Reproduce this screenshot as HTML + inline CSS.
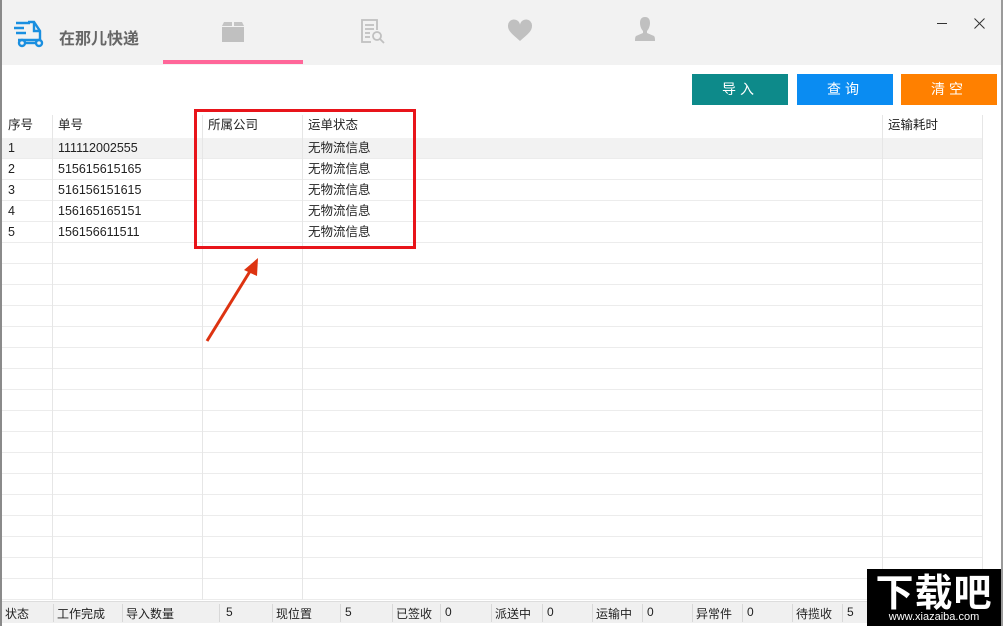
<!DOCTYPE html>
<html><head><meta charset="utf-8"><style>
*{margin:0;padding:0;box-sizing:border-box}
body{width:1003px;height:626px;overflow:hidden;background:#fff;font-family:"Liberation Sans","Noto Sans CJK SC",sans-serif;position:relative;font-size:12px;color:#222}
.top{position:absolute;left:0;top:0;width:1003px;height:65px;background:#f2f2f2}
.abs{position:absolute}
.btn{position:absolute;top:74px;height:31px;color:#fff;font-size:14px;text-align:center;line-height:31px;letter-spacing:4px}
.grid{position:absolute;left:2px;top:138px;width:980px;height:462px;
background-image:linear-gradient(to bottom,transparent 20px,#ececec 20px);background-size:100% 21px}
.vl{position:absolute;top:115px;height:485px;width:1px;background:#e6e6e6}
.cell{position:absolute;font-size:12.5px;line-height:21px}
.sb{position:absolute;left:2px;top:601px;width:865px;height:22px;background:#f0f0f0;border-top:1px solid #ddd}
.sb span{position:absolute;top:3px;font-size:12px}
.sb i{position:absolute;top:2px;width:1px;height:18px;background:#d8d8d8}
</style></head><body>
<div class="top"></div>
<div class="abs" style="left:0;top:0;width:2px;height:626px;background:#8a8a8a"></div>
<div class="abs" style="left:1001px;top:0;width:2px;height:626px;background:#9a9a9a"></div>
<svg class="abs" style="left:14px;top:20px" width="36" height="28" viewBox="0 0 36 28"><g stroke="#1a8fe0" stroke-width="2.4" fill="none"><path d="M2 3h14M0 8h10M2 13h10"/><path d="M14 2h6l6 9v9H4"/><path d="M20 2v9h6"/><circle cx="8" cy="23" r="3"/><circle cx="25" cy="23" r="3"/><path d="M11 23h11"/></g></svg>
<div class="abs" style="left:59px;top:25px;font-size:16px;color:#666;font-weight:bold">在那儿快递</div>
<svg class="abs" style="left:221px;top:22px" width="24" height="20"><path d="M1 5h22v15H1z" fill="#c0c0c0"/><path d="M3 0h8v4H1zM13 0h8l2 4H13z" fill="#c4c4c4"/></svg>
<div class="abs" style="left:163px;top:60px;width:140px;height:4px;background:#ff6699"></div>
<svg class="abs" style="left:361px;top:19px" width="26" height="25"><g fill="none" stroke="#c0c0c0" stroke-width="1.8"><path d="M10 23H1V1h15v10"/><path d="M4 6h9M4 10h9M4 14h5M4 18h5"/><circle cx="16" cy="17" r="4"/><path d="M19 20l4 4"/></g></svg>
<svg class="abs" style="left:507px;top:19px" width="26" height="23"><path d="M13 22C5 15 1 12 1 7a6 6 0 0 1 12-1 6 6 0 0 1 12 1c0 5-4 8-12 15z" fill="#c0c0c0"/></svg>
<svg class="abs" style="left:634px;top:16px" width="22" height="26"><path d="M11 1c4 0 5 3 5 6 0 4-2 7-3 8v2l7 3c1 1 1 3 1 5H1c0-2 0-4 1-5l7-3v-2c-1-1-3-4-3-8 0-3 1-6 5-6z" fill="#c0c0c0"/></svg>
<div class="abs" style="left:937px;top:23px;width:10px;height:1px;background:#333"></div>
<svg class="abs" style="left:974px;top:18px" width="11" height="11"><path d="M0.5 0.5l10 10M10.5 0.5l-10 10" stroke="#333" stroke-width="1"/></svg>
<div class="btn" style="left:692px;width:96px;background:#0d8a8a">导入</div>
<div class="btn" style="left:797px;width:96px;background:#0a8cf2">查询</div>
<div class="btn" style="left:901px;width:96px;background:#ff8000">清空</div>
<div class="grid"></div>
<div class="abs" style="left:2px;top:138px;width:980px;height:20px;background:#f2f2f2"></div>
<div class="vl" style="left:52px"></div>
<div class="vl" style="left:202px"></div>
<div class="vl" style="left:302px"></div>
<div class="vl" style="left:882px"></div>
<div class="vl" style="left:982px"></div>
<div class="cell" style="left:8px;top:115px">序号</div>
<div class="cell" style="left:58px;top:115px">单号</div>
<div class="cell" style="left:208px;top:115px">所属公司</div>
<div class="cell" style="left:308px;top:115px">运单状态</div>
<div class="cell" style="left:888px;top:115px">运输耗时</div>
<div class="cell" style="left:8px;top:138px">1<br>2<br>3<br>4<br>5</div>
<div class="cell" style="left:58px;top:138px">111112002555<br>515615615165<br>516156151615<br>156165165151<br>156156611511</div>
<div class="cell" style="left:308px;top:138px">无物流信息<br>无物流信息<br>无物流信息<br>无物流信息<br>无物流信息</div>
<div class="abs" style="left:194px;top:109px;width:222px;height:140px;border:3px solid #e8141a"></div>
<svg class="abs" style="left:200px;top:250px" width="70" height="95"><path d="M7 91L52 18" stroke="#d31" stroke-width="3"/><path d="M58 8L44 20l13 6z" fill="#d31"/></svg>
<div class="sb">
<span style="left:3px">状态</span><i style="left:51px"></i>
<span style="left:55px">工作完成</span><i style="left:120px"></i>
<span style="left:124px">导入数量</span><i style="left:217px"></i>
<span style="left:224px">5</span><i style="left:270px"></i>
<span style="left:274px">现位置</span><i style="left:338px"></i>
<span style="left:343px">5</span><i style="left:390px"></i>
<span style="left:394px">已签收</span><i style="left:438px"></i>
<span style="left:443px">0</span><i style="left:489px"></i>
<span style="left:493px">派送中</span><i style="left:540px"></i>
<span style="left:545px">0</span><i style="left:590px"></i>
<span style="left:594px">运输中</span><i style="left:640px"></i>
<span style="left:645px">0</span><i style="left:690px"></i>
<span style="left:694px">异常件</span><i style="left:740px"></i>
<span style="left:745px">0</span><i style="left:790px"></i>
<span style="left:794px">待揽收</span><i style="left:840px"></i>
<span style="left:845px">5</span>
</div>
<div class="abs" style="left:867px;top:569px;width:134px;height:57px;background:#000;color:#fff;text-align:center">
<div style="font-size:38px;font-weight:bold;line-height:42px;letter-spacing:1px;font-family:'Noto Sans CJK SC',sans-serif">下载吧</div>
<div style="font-size:11px;line-height:12px">www.xiazaiba.com</div>
</div>
</body></html>
